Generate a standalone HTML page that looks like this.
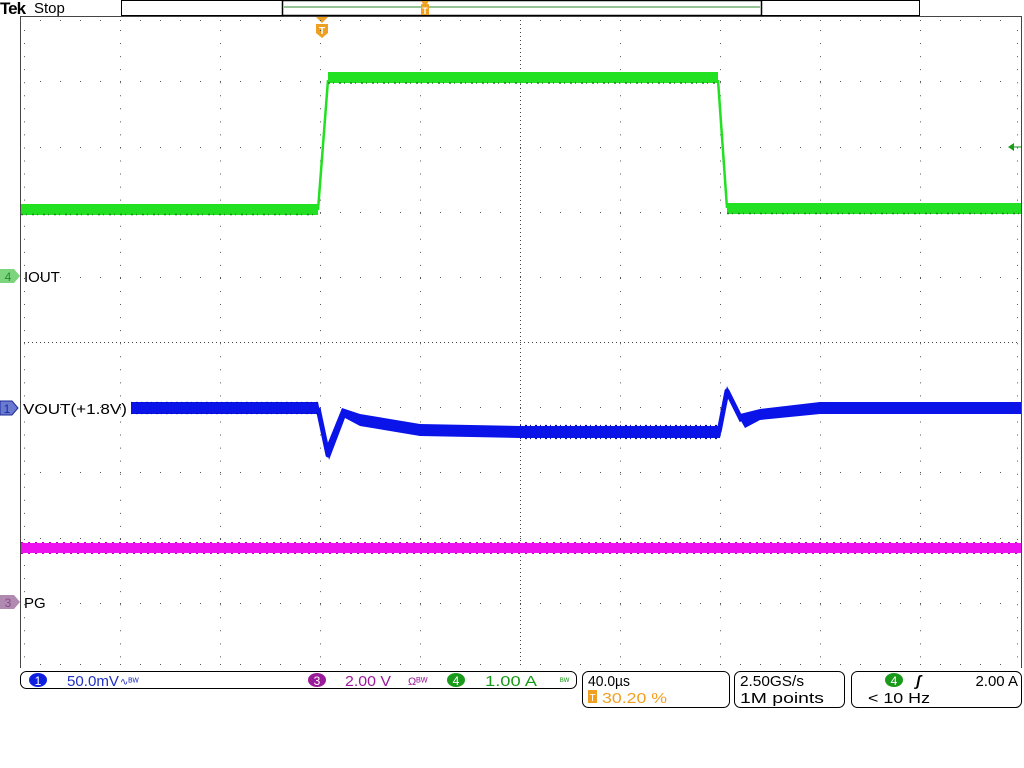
<!DOCTYPE html>
<html><head><meta charset="utf-8"><style>
html,body{margin:0;padding:0;background:#fff;width:1024px;height:768px;overflow:hidden}
svg{display:block}
text{font-family:"Liberation Sans","DejaVu Sans",sans-serif}
</style></head><body>
<svg width="1024" height="768" viewBox="0 0 1024 768" xmlns="http://www.w3.org/2000/svg">
<rect width="1024" height="768" fill="#fff"/>
<text x="0" y="14" font-family="Liberation Serif" font-weight="bold" font-size="17" fill="#000" letter-spacing="-1">Tek</text>
<text x="34" y="13" font-size="15" fill="#000">Stop</text>
<rect x="121.5" y="0.5" width="798" height="15" fill="#fff" stroke="#000" stroke-width="1"/>
<rect x="282.5" y="0.5" width="479" height="15" fill="#fff" stroke="#000" stroke-width="1.5"/>
<line x1="284" y1="7" x2="760" y2="7" stroke="#2a8a2a" stroke-width="1"/>
<path d="M421 1h8l-2 3h-4z" fill="#f0a020"/>
<rect x="421" y="4" width="8" height="11" rx="1" fill="#f0a020"/>
<text x="425" y="14" font-size="9" fill="#fff" text-anchor="middle" font-weight="bold">T</text>
<path d="M316 17h12l-6 6z" fill="#f0a020"/>
<path d="M316 24h12v9l-6 5l-6-5z" fill="#f0a020"/>
<text x="322" y="34" font-size="10" fill="#fff" text-anchor="middle" font-weight="bold">T</text>
<g stroke="#444" stroke-width="1">
<line x1="20.5" y1="16" x2="20.5" y2="668"/>
<line x1="1021.5" y1="16" x2="1021.5" y2="668"/>
<line x1="20" y1="16.5" x2="1022" y2="16.5"/>
</g>
<g stroke="#555" stroke-width="1" stroke-dasharray="1 19">
<line x1="20" y1="81.5" x2="1020" y2="81.5"/>
<line x1="20" y1="147.5" x2="1020" y2="147.5"/>
<line x1="20" y1="212.5" x2="1020" y2="212.5"/>
<line x1="20" y1="277.5" x2="1020" y2="277.5"/>
<line x1="20" y1="407.5" x2="1020" y2="407.5"/>
<line x1="20" y1="472.5" x2="1020" y2="472.5"/>
<line x1="20" y1="538.5" x2="1020" y2="538.5"/>
<line x1="20" y1="603.5" x2="1020" y2="603.5"/>
<line x1="20" y1="20.5" x2="1020" y2="20.5"/>
<line x1="20" y1="664.5" x2="1020" y2="664.5"/>
</g>
<g stroke="#555" stroke-width="1" stroke-dasharray="1 12.05">
<line x1="120.5" y1="30" x2="120.5" y2="668"/>
<line x1="220.5" y1="30" x2="220.5" y2="668"/>
<line x1="320.5" y1="30" x2="320.5" y2="668"/>
<line x1="420.5" y1="30" x2="420.5" y2="668"/>
<line x1="620.5" y1="30" x2="620.5" y2="668"/>
<line x1="720.5" y1="30" x2="720.5" y2="668"/>
<line x1="820.5" y1="30" x2="820.5" y2="668"/>
<line x1="920.5" y1="30" x2="920.5" y2="668"/>
<line x1="24.5" y1="30" x2="24.5" y2="668"/>
<line x1="1017.5" y1="30" x2="1017.5" y2="668"/>
</g>
<g stroke="#444" stroke-width="1" stroke-dasharray="1 3">
<line x1="20" y1="342.5" x2="1020" y2="342.5"/>
<line x1="520.5" y1="16" x2="520.5" y2="668"/>
</g>
<!-- green trace -->
<rect x="21" y="204" width="297" height="11" fill="#22e022"/>
<rect x="328" y="72" width="390" height="11" fill="#22e022"/>
<rect x="727" y="203" width="294" height="11" fill="#22e022"/>
<path d="M318 210L328 80M718 80L727 208" stroke="#22e022" stroke-width="2.5" fill="none"/>
<path d="M21 214.5H318M328 83H718M727 213.5H1021" stroke="#1a8a1a" stroke-width="1.5" stroke-dasharray="2 3 1 5" fill="none"/>
<path d="M1008 147l6-4v8z" fill="#1a9a1a"/><line x1="1012" y1="147" x2="1021" y2="147" stroke="#1a9a1a"/>
<!-- blue trace -->
<polygon fill="#0a14e8" points="131,402 318,402 327,445 342,408 360,414 420,424 520,426 718,426 727,386 740,414 760,409 820,402 1021,402 1021,414 820,414 760,420 745,428 728,398 720,438 520,438 420,436 360,426 345,418 329,460 320,414 131,414"/>
<path d="M318 408L328 455L343 413M719 432L727 391L742 421" fill="none" stroke="#0a14e8" stroke-width="5" stroke-linejoin="round"/>
<path d="M131 402.5H318M131 413.5H318M520 425.5H718M520 438.5H718" stroke="#0010b0" stroke-width="1.2" stroke-dasharray="1 4 2 3" fill="none"/>
<!-- magenta -->
<rect x="21" y="543" width="1000" height="10" fill="#ee10ee"/>
<path d="M21 542.5H1021M21 553.5H1021" stroke="#c000c0" stroke-dasharray="2 5" fill="none"/>
<!-- channel markers -->
<path d="M0 269h14l6 7l-6 7h-14z" fill="#7cd47c"/>
<text x="8" y="281" font-size="12" fill="#2a8a2a" text-anchor="middle">4</text>
<text x="24" y="282" font-size="15" fill="#000">IOUT</text>
<path d="M0 401h12l6 7l-6 7h-12z" fill="#6a7ad0" stroke="#1a2a9a"/>
<text x="7" y="413" font-size="12" fill="#1a2a9a" text-anchor="middle">1</text>
<text x="23" y="414" font-size="15" fill="#000" textLength="104" lengthAdjust="spacingAndGlyphs">VOUT(+1.8V)</text>
<path d="M0 595h14l6 7l-6 7h-14z" fill="#b08ab0"/>
<text x="8" y="607" font-size="12" fill="#8a4a8a" text-anchor="middle">3</text>
<text x="24" y="608" font-size="15" fill="#000">PG</text>
<!-- bottom bar -->
<rect x="20.5" y="671.5" width="556" height="17" rx="6" fill="#fff" stroke="#000"/>
<ellipse cx="38" cy="680" rx="9" ry="7" fill="#1020e0"/>
<text x="38" y="685" font-size="12" fill="#fff" text-anchor="middle">1</text>
<text x="67" y="686" font-size="15" fill="#2030c0" textLength="52" lengthAdjust="spacingAndGlyphs">50.0mV</text>
<text x="120" y="685" font-size="10" fill="#2030c0">∿ᴮᵂ</text>
<ellipse cx="317" cy="680" rx="9" ry="7" fill="#9a1a9a"/>
<text x="317" y="685" font-size="12" fill="#fff" text-anchor="middle">3</text>
<text x="345" y="686" font-size="15" fill="#9a1a9a" textLength="46" lengthAdjust="spacingAndGlyphs">2.00 V</text>
<text x="408" y="685" font-size="11" fill="#9a1a9a">Ωᴮᵂ</text>
<ellipse cx="456" cy="680" rx="9" ry="7" fill="#1a9a1a"/>
<text x="456" y="685" font-size="12" fill="#fff" text-anchor="middle">4</text>
<text x="485" y="686" font-size="15" fill="#1a9a1a" textLength="52" lengthAdjust="spacingAndGlyphs">1.00 A</text>
<text x="560" y="684" font-size="9" fill="#1a9a1a">ᴮᵂ</text>
<rect x="582.5" y="671.5" width="147" height="36" rx="6" fill="#fff" stroke="#000"/>
<text x="588" y="686" font-size="15" fill="#000" textLength="42" lengthAdjust="spacingAndGlyphs">40.0µs</text>
<rect x="588" y="690" width="9" height="13" fill="#f0a020"/>
<text x="592.5" y="701" font-size="10" fill="#fff" text-anchor="middle">T</text>
<text x="602" y="703" font-size="15" fill="#f0a020" textLength="65" lengthAdjust="spacingAndGlyphs">30.20 %</text>
<rect x="734.5" y="671.5" width="110" height="36" rx="6" fill="#fff" stroke="#000"/>
<text x="740" y="686" font-size="15" fill="#000" textLength="64" lengthAdjust="spacingAndGlyphs">2.50GS/s</text>
<text x="740" y="703" font-size="15" fill="#000" textLength="84" lengthAdjust="spacingAndGlyphs">1M points</text>
<rect x="851.5" y="671.5" width="170" height="36" rx="6" fill="#fff" stroke="#000"/>
<ellipse cx="894" cy="680" rx="9" ry="7" fill="#1a9a1a"/>
<text x="894" y="685" font-size="12" fill="#fff" text-anchor="middle">4</text>
<text x="916" y="686" font-size="15" fill="#000" font-style="italic" font-weight="bold">ʃ</text>
<text x="1018" y="686" font-size="15" fill="#000" text-anchor="end">2.00 A</text>
<text x="868" y="703" font-size="15" fill="#000" textLength="62" lengthAdjust="spacingAndGlyphs">&lt; 10 Hz</text>
</svg>
</body></html>
